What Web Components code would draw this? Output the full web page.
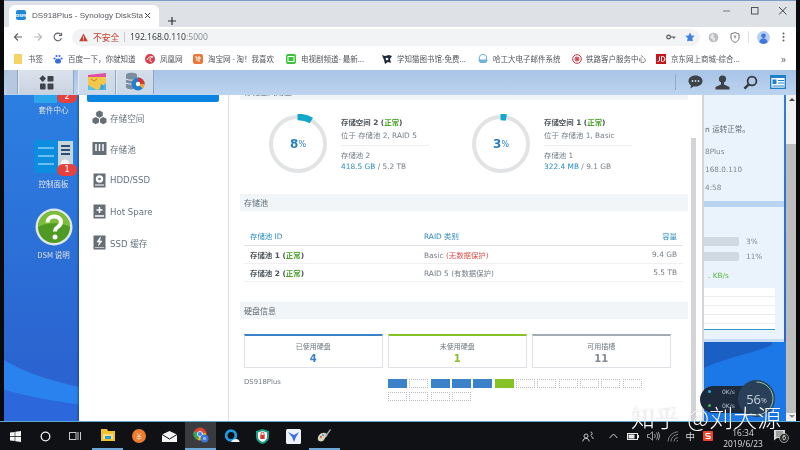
<!doctype html>
<html lang="zh">
<head>
<meta charset="utf-8">
<title>DS918Plus</title>
<style>
html, body { margin: 0; padding: 0; background: #0a0a0c; overflow: hidden; }
</style>
</head>
<body>
<nas-screen></nas-screen>
<script>
(function () {
  const CJK = '"Noto Sans CJK SC", sans-serif';
  const UI = '"Open Sans", "Noto Sans CJK SC", sans-serif';
  const DSM = '"DejaVu Sans", "Noto Sans CJK SC", sans-serif';

  function define(name, html) {
    class Thing extends HTMLElement {
      constructor() {
        super();
        this.attachShadow({ mode: "open" });
        this.shadowRoot.innerHTML = typeof html === "function" ? html(this) : html;
      }
    }
    window.customElements.define(name, Thing);
  }
  const attr = (el, key, dflt) => el.getAttribute(key) ?? dflt ?? "";

  // browser chrome -----------------------------------------------------------
  define("tab-strip", `
<style>
:host { display: flex; height: 26px; background: #dee1e6; border-top: 1px solid #7d9cc8; align-items: flex-end; font-family: ${UI}; color: #3c4043; flex: none; }
.tab { width: 150px; height: 22px; margin-left: 5px; background: #fff; border-radius: 6px 6px 0 0; display: flex; align-items: center; box-sizing: border-box; padding: 0 0 2px 7px; }
.fav { width: 10px; height: 10px; background: #1e88d8; border-radius: 2px; color: #fff; font: 700 4px ${DSM}; display: flex; align-items: center; justify-content: center; flex: none; }
.title { font: 8.100px "Liberation Sans", sans-serif; width: 109px; margin-left: 6px; white-space: nowrap; color: #55595e; }
.x { margin-left: 3px; }
.plus { margin: 0 0 2px 9px; }
.ctl { margin-left: auto; display: flex; align-self: flex-start; gap: 18px; padding: 5px 8px 0 0; }
svg { display: block; }
</style>
<div class="tab"><div class="fav">DSM</div><div class="title">DS918Plus - Synology DiskSta</div>
<svg class="x" width="7" height="7" viewBox="0 0 7 7"><path d="M1 1l5 5M6 1L1 6" stroke="#444" stroke-width="1"/></svg></div>
<svg class="plus" width="8" height="8" viewBox="0 0 8 8"><path d="M4 0v8M0 4h8" stroke="#333" stroke-width="1.2"/></svg>
<div class="ctl">
<svg width="10" height="10" viewBox="0 0 10 10"><path d="M1 5h7" stroke="#777" stroke-width="1"/></svg>
<svg width="10" height="10" viewBox="0 0 10 10"><rect x="1.5" y="1.5" width="6.5" height="6.5" fill="none" stroke="#555" stroke-width="1"/></svg>
<svg width="10" height="10" viewBox="0 0 10 10"><path d="M1 1l7.5 7.5M8.5 1L1 8.5" stroke="#444" stroke-width="1"/></svg>
</div>`);

  define("tool-bar", `
<style>
:host { display: flex; height: 20px; background: #fff; align-items: center; font-family: ${UI}; flex: none; }
svg { display: block; flex: none; }
.nav { display: flex; gap: 10px; margin-left: 9px; }
.box { margin-left: 9px; width: 628px; height: 17px; border-radius: 9px; background: #f1f3f4; display: flex; align-items: center; box-sizing: border-box; padding: 0 5px 0 7px; }
.warn { color: #c5402f; font: 8.700px ${CJK}; margin-left: 5px; }
.sep { width: 1px; height: 10px; background: #c9cbce; margin: 0 5px; }
.url { font-size: 8.600px; color: #303336; }
.url span { color: #8a8e92; }
.end { margin-left: auto; display: flex; gap: 9px; align-items: center; }
.right { display: flex; align-items: center; margin-left: 8px; }
</style>
<div class="nav">
<svg width="10" height="10" viewBox="0 0 10 10"><path d="M9 5H1.5M5 1.5L1.5 5 5 8.5" fill="none" stroke="#5f6368" stroke-width="1.2"/></svg>
<svg width="10" height="10" viewBox="0 0 10 10"><path d="M1 5h7.5M5 1.5L8.5 5 5 8.5" fill="none" stroke="#b8babd" stroke-width="1.2"/></svg>
<svg width="10" height="10" viewBox="0 0 10 10"><path d="M8.500 6.200A3.800 3.800 0 1 1 7.600 2.200M8.600.8v2.600H6" fill="none" stroke="#5f6368" stroke-width="1.1"/></svg>
</div>
<div class="box">
<svg width="9" height="9" viewBox="0 0 9 9"><path d="M4.500.5L8.800 8.300H.2z" fill="#c5402f"/><path d="M4.500 3.200v2.600M4.500 6.400v.9" stroke="#fff" stroke-width=".8"/></svg>
<span class="warn">不安全</span><i class="sep"></i><span class="url">192.168.0.110<span>:5000</span></span>
<div class="end">
<svg width="10" height="8" viewBox="0 0 10 8"><circle cx="2.600" cy="4" r="1.800" fill="none" stroke="#50555a" stroke-width="1.2"/><path d="M4.400 4h5M7.800 4v1.800" stroke="#50555a" stroke-width="1.2"/></svg>
<svg width="10" height="10" viewBox="0 0 10 10"><path d="M5 .4l1.400 3 3.300.4-2.400 2.200.6 3.300L5 8.700 2.100 9.300l.6-3.300L.3 3.800l3.300-.4z" fill="#3f7fe0"/></svg>
</div></div>
<div class="right">
<svg width="11" height="11" viewBox="0 0 11 11"><circle cx="5.500" cy="5.500" r="4.800" fill="#b9bcc0"/><path d="M4 1.500l2.500 1.500-1 2 2 1.500L6 10 4.500 7.500 2 5.500z" fill="#e4e5e7"/></svg>
<svg style="margin-left:11px" width="10" height="11" viewBox="0 0 10 11"><path d="M5 .6l4 1.300v4C9 8.200 7 9.800 5 10.400 3 9.800 1 8.200 1 5.900v-4z" fill="none" stroke="#777" stroke-width="1"/><path d="M3.500 3.500h3L5 7z" fill="#999"/></svg>
<i style="width:1px;height:12px;background:#dcdde0;margin:0 8px 0 8px"></i>
<svg width="13" height="13" viewBox="0 0 13 13"><circle cx="6.500" cy="6.500" r="6.500" fill="#b8cdf2"/><circle cx="6.500" cy="4.700" r="2.300" fill="#3f78dc"/><path d="M2.300 11.200c.6-3 2.400-4 4.200-4s3.600 1 4.200 4a6.500 6.500 0 0 1-8.400 0z" fill="#3f78dc"/></svg>
<svg style="margin-left:12px" width="3" height="10" viewBox="0 0 3 10"><circle cx="1.500" cy="1.500" r="1" fill="#5f6368"/><circle cx="1.500" cy="5" r="1" fill="#5f6368"/><circle cx="1.500" cy="8.500" r="1" fill="#5f6368"/></svg>
</div>`);

  define("book-mark", (el) => `
<style>
:host { display: flex; align-items: center; flex: none; width: ${attr(el, "w", "90")}px; height: 100%; font: 7.500px ${CJK}; color: #50545a; white-space: nowrap; }
slot { display: block; width: 10px; height: 10px; }
::slotted(svg) { display: block; }
span { margin-left: ${attr(el, "gap", "5")}px; }
</style><slot></slot><span>${attr(el, "text")}</span>`);

  define("book-bar", `
<style>
:host { display: flex; height: 23px; background: #fff; padding-left: 9px; flex: none; align-items: center; }
b { margin-left: auto; margin-right: 10px; font: 400 10px ${UI}; color: #666; }
</style><slot></slot><b>»</b>`);

  // dsm top bar --------------------------------------------------------------
  define("dsm-bar", `
<style>
:host { display: flex; height: 25px; background: linear-gradient(#a7c3e6, #bdd4ef); flex: none; box-sizing: border-box; padding-left: 3px; }
.seg { height: 24px; display: flex; align-items: center; justify-content: center; flex: none; border-right: 1px solid #8fa6c2; border-left: 1px solid #e4ebf4; box-sizing: border-box; }
.lead { width: 11px; background: #b6c8df; border-left: 0; }
.main { width: 56px; background: linear-gradient(#dbe2ec, #c9d3e0); }
.app { width: 38px; background: linear-gradient(#d4dde9, #cbd8e8); }
.r { margin-left: auto; display: flex; align-items: center; padding-right: 10px; height: 24px; }
.r i { width: 1px; height: 16px; background: #94aac6; margin-right: 12px; }
svg { display: block; }
</style>
<div class="seg lead"></div>
<div class="seg main"><svg width="15" height="15" viewBox="0 0 15 15" fill="#3f444a"><path d="M3.700 .3l3.300 3.300-3.300 3.300L.4 3.600z"/><rect x="8.500" y="1" width="6" height="5.600" rx=".8"/><rect x="1" y="8.600" width="5.600" height="5.800" rx=".8"/><rect x="8.500" y="8.600" width="6" height="5.800" rx=".8"/></svg></div>
<i style="width:4px;flex:none"></i>
<div class="seg app"><svg width="20" height="20" viewBox="0 0 20 20"><path d="M1 3l18-2v6L1 9z" fill="#e14fa0"/><path d="M1 5h18v13H1z" fill="#f2c74a"/><path d="M1 13l9 5H1z" fill="#55c1e8"/><path d="M11 18l8-7v7z" fill="#46b4e0"/><path d="M4 7l3 2 3-2" fill="none" stroke="#b8872a" stroke-width="1"/><path d="M14 12l3 2-1 4-3-2z" fill="#3e9fdb"/></svg></div>
<div class="seg app"><svg width="21" height="20" viewBox="0 0 21 20"><path d="M1 3c0-3 11-3 11 0v12c0 3-11 3-11 0z" fill="#7b8c9c"/><path d="M1 7c2 1.600 9 1.600 11 0M1 11c2 1.600 9 1.600 11 0" stroke="#e8edf1" fill="none"/><circle cx="13" cy="12" r="6.500" fill="#1f7fd0"/><path d="M13 12V5.500A6.500 6.500 0 0 1 19.500 12z" fill="#d8342c"/><path d="M13 12h6.500a6.500 6.500 0 0 1-2 4.600z" fill="#efa52c"/><circle cx="13" cy="12" r="2.200" fill="#fff"/></svg></div>
<div class="r"><i></i>
<svg width="15" height="14" viewBox="0 0 16 15"><path d="M8 .5c4.200 0 7.500 2.600 7.500 5.900S12.200 12.300 8 12.300c-.7 0-1.300-.1-1.900-.2L2.600 14.500l.6-3.300C1.500 10 .5 8.300.5 6.400.5 3.100 3.800.5 8 .5z" fill="#3c4248"/><g fill="#c3d6ee"><circle cx="4.800" cy="6.400" r="1"/><circle cx="8" cy="6.400" r="1"/><circle cx="11.200" cy="6.400" r="1"/></g></svg>
<svg style="margin:0 13px 0 12px" width="15" height="15" viewBox="0 0 15 15" fill="#3c4248"><circle cx="7.500" cy="4" r="3.600"/><path d="M6 7h3v2.500l5.500 2.500v2.500H.5V12L6 9.500z"/></svg>
<svg style="margin-right:12px" width="15" height="15" viewBox="0 0 15 15"><circle cx="9" cy="6" r="4.400" fill="none" stroke="#33393f" stroke-width="1.800"/><path d="M5.800 9.300L1.400 13.700" stroke="#33393f" stroke-width="2.400"/></svg>
<svg width="16" height="14" viewBox="0 0 16 14"><rect x=".7" y=".7" width="14.600" height="12.600" fill="#fff" stroke="#1e80c8" stroke-width="1.400"/><rect x="1" y="1" width="14" height="2" fill="#1e80c8"/><rect x="2.500" y="4.500" width="4" height="4.500" fill="#1e80c8"/><path d="M8 5.500h6M8 8h6M2.500 11h11.500" stroke="#1e80c8"/></svg>
</div>`);

  // desktop ------------------------------------------------------------------
  define("desk-icon", (el) => `
<style>
:host { position: absolute; left: 0; top: ${attr(el, "top", "0")}px; width: 75px; box-sizing: border-box; padding-left: 24px; display: flex; flex-direction: column; align-items: center; font: 7.500px/10px ${CJK}; color: #e8f1fb; text-shadow: 0 0 1px #1a4fa0; }
.badge { position: absolute; left: 53px; top: ${attr(el, "by", "0")}px; width: 20px; height: 12px; border-radius: 6px; background: #e5413e; color: #fff; font: 8px/12px ${DSM}; text-align: center; text-shadow: none; }
span { white-space: nowrap; }
</style><slot></slot><div class="badge" ${el.hasAttribute("badge") ? "" : "hidden"}>${attr(el, "badge")}</div><span>${attr(el, "text")}</span>`);

  define("side-item", (el) => `
<style>
:host { display: flex; align-items: center; height: 31.300px; padding-left: 13px; font: 8.600px ${DSM}; color: #67737e; white-space: nowrap; }
slot { display: block; width: 15px; height: 15px; }
::slotted(svg) { display: block; }
span { margin-left: 3px; }
</style><slot></slot><span>${attr(el, "text")}</span>`);

  define("side-bar", `
<style>
:host { display: block; width: 149px; background: #fff; flex: none; border-right: 1px solid #dcdfe2; }
.sel { height: 7px; margin: 0 9px 0 8px; background: #0a84e0; border-radius: 0 0 2px 2px; }
</style><div class="sel"></div><slot></slot>`);

  define("sec-head", (el) => `
<style>
:host { display: block; height: 17px; background: #f2f5f8; padding-left: 4px; font: 8px/17px ${CJK}; color: #5e6a74; white-space: nowrap; }
</style>${attr(el, "text")}`);

  define("ring-gauge", (el) => {
    const pct = Number(attr(el, "arc", "8"));
    const c = 2 * Math.PI * 27;
    return `
<style>
:host { display: block; width: 60px; height: 60px; position: relative; flex: none; }
svg { display: block; }
div { position: absolute; inset: 0; display: flex; align-items: center; justify-content: center; font: 700 12px ${DSM}; color: #2a7fc0; }
small { font-size: 8px; font-weight: 400; }
</style>
<svg width="60" height="60" viewBox="0 0 60 60"><circle cx="30" cy="30" r="27" fill="none" stroke="#e1e3e5" stroke-width="4"/><circle cx="30" cy="30" r="27" fill="none" stroke="#12a8cc" stroke-width="6.500" stroke-dasharray="${(pct / 100) * c} ${c}" transform="rotate(-91 30 30)"/></svg>
<div>${attr(el, "value")}<small>%</small></div>`;
  });

  define("volume-card", (el) => `
<style>
:host { display: flex; width: 203px; flex: none; box-sizing: border-box; padding: 14px 0 0 28px; font: 7.400px/13px ${DSM}; color: #757e86; white-space: nowrap; }
.txt { margin: 1.500px 0 0 13px; width: 88px; }
.name { font-weight: 700; color: #4c5359; }
.ok { color: #4aa52a; }
.loc { padding-bottom: 3px; border-bottom: 1px solid #eceef0; }
.pool { margin-top: 3px; line-height: 11px; padding-top: 1px; }
.use { line-height: 11px; }
.use b { color: #2a8cc0; font-weight: 400; }
</style>
<ring-gauge value="${attr(el, "value")}" arc="${attr(el, "arc")}"></ring-gauge>
<div class="txt"><div class="name">${attr(el, "name")} (<span class="ok">正常</span>)</div>
<div class="loc">${attr(el, "loc")}</div><div class="pool">${attr(el, "pool")}</div>
<div class="use"><b>${attr(el, "used")}</b> / ${attr(el, "total")}</div></div>`);

  define("pool-table", `
<style>
:host { display: block; margin: 17px 5px 0 4px; font: 7.400px ${DSM}; color: #757e86; white-space: nowrap; }
.row { display: grid; grid-template-columns: 174px 1fr auto; align-items: center; height: 17px; padding: 0 6px; border-bottom: 1px solid #eef0f2; }
.head { color: #2a8cc0; border-bottom: 1px solid #dfe3e6; box-sizing: border-box; height: 18px; padding-bottom: 3px; }
.row b { color: #4c5359; }
.row b span { color: #4aa52a; }
.bad { color: #d9534f; }
</style>
<div class="row head"><div>存储池 ID</div><div>RAID 类别</div><div>容量</div></div>
<div class="row"><b>存储池 1 (<span>正常</span>)</b><div>Basic <span class="bad">(无数据保护)</span></div><div>9.4 GB</div></div>
<div class="row"><b>存储池 2 (<span>正常</span>)</b><div>RAID 5 (有数据保护)</div><div>5.5 TB</div></div>`);

  define("disk-card", (el) => `
<style>
:host { display: flex; flex-direction: column; align-items: center; width: 138.500px; height: 34px; box-sizing: border-box; border: 1px solid #dfe3e7; border-top: 2.500px solid ${attr(el, "color")}; font: 7px ${CJK}; color: #6e777f; }
.l { margin-top: 6px; line-height: 9px; }
.n { font: 700 10px/12px ${DSM}; color: ${attr(el, "num-color", attr(el, "color"))}; margin-top: 2px; }
</style><div class="l">${attr(el, "label")}</div><div class="n">${attr(el, "num")}</div>`);

  define("disk-slots", `
<style>
:host { display: grid; grid-template-columns: repeat(12, 19px); column-gap: 2.330px; row-gap: 4px; }
i { height: 9px; box-sizing: border-box; }
.u { background: #3b82c8; }
.g { background: #84c226; }
.e { border: 1px dotted #b9bec4; }
</style>
<i class="u"></i><i class="e"></i><i class="u"></i><i class="u"></i><i class="u"></i><i class="g"></i>${'<i class="e"></i>'.repeat(10)}`);

  define("storage-pane", `
<style>
:host { display: block; flex: 1; min-width: 0; background: #fff; position: relative; overflow: hidden; border-right: 2px solid #d4d6d8; box-sizing: border-box; }
.body { width: 448px; margin: -12px 0 0 11px; }
.vols { display: flex; height: 94px; }
.cards { display: flex; gap: 5.500px; margin: 15px 0 0 4px; }
.bays { display: flex; margin: 11px 0 0 4px; font: 6.900px/7px ${DSM}; color: #757e86; }
.bays span { width: 144px; }
.bar { position: absolute; right: 6px; top: 43px; bottom: 0; width: 5px; background: #d2d3d5; }
.m { margin-top: 20px; }
</style>
<div class="body">
<sec-head text="存储空间用量"></sec-head>
<div class="vols">
<volume-card value="8" arc="8.500" name="存储空间 2" loc="位于 存储池 2, RAID 5" pool="存储池 2" used="418.5 GB" total="5.2 TB"></volume-card>
<volume-card value="3" arc="3.500" name="存储空间 1" loc="位于 存储池 1, Basic" pool="存储池 1" used="322.4 MB" total="9.1 GB"></volume-card>
</div>
<sec-head text="存储池"></sec-head>
<pool-table></pool-table>
<sec-head class="m" text="硬盘信息"></sec-head>
<div class="cards">
<disk-card color="#3b82c8" label="已使用硬盘" num="4"></disk-card>
<disk-card color="#84c226" label="未使用硬盘" num="1"></disk-card>
<disk-card color="#a3acb5" num-color="#858c94" label="可用插槽" num="11"></disk-card>
</div>
<div class="bays"><span>DS918Plus</span><disk-slots></disk-slots></div>
</div>
<div class="bar"></div>`);

  define("side-widgets", `
<style>
:host { display: flex; flex-direction: column; width: 82px; flex: none; font: 7.300px ${DSM}; color: #7b8894; white-space: nowrap; position: relative; }
.a, .b { width: 80px; background: #eaf3fc; box-sizing: border-box; }
.a { height: 106px; padding: 29px 0 0 1px; }
.a div { height: 18px; line-height: 12px; }
.a div:first-child { height: 22px; color: #5e6a74; font-size: 7.500px; }
.band { width: 80px; height: 6px; background: #b8d4f0; }
.b { height: 135px; padding-top: 27px; border-bottom: 3px solid #c6dcf3; }
.m { display: flex; align-items: center; height: 15px; }
.m i { width: 35px; height: 9px; background: #d0d9e2; border-radius: 0 2px 2px 0; margin-right: 7px; }
.k { color: #53b53a; margin: 6px 0 0 4px; height: 12px; line-height: 12px; }
.ch { width: 71px; height: 42px; margin-top: 6px; background: repeating-linear-gradient(#fff 0, #fff 8px, #e9edf0 8px, #e9edf0 9px); border-bottom: 1.500px solid #2a9ac8; box-sizing: border-box; }
</style>
<div class="a"><div>n 运转正常。</div><div>8Plus</div><div>168.0.110</div><div>4:58</div></div>
<div class="band"></div>
<div class="b"><div class="m"><i></i>3%</div><div class="m"><i></i>11%</div><div class="k">. KB/s</div><div class="ch"></div></div>`);

  define("net-meter", `
<style>
:host { display: block; position: absolute; left: 696px; top: 285px; width: 80px; height: 38px; font: 6px ${DSM}; color: #b9c4d0; }
.pill { position: absolute; left: 0; top: 6px; width: 62px; height: 27px; border-radius: 14px; background: #1c2a3c; }
.t { position: absolute; left: 22px; white-space: nowrap; }
.d { position: absolute; left: 8px; width: 3px; height: 3px; border-radius: 50%; }
svg { position: absolute; left: 38px; top: 0; }
.v { position: absolute; left: 38px; top: 0; width: 37px; height: 37px; display: flex; align-items: center; justify-content: center; font: 13px ${UI}; color: #c9d4df; }
.v small { font-size: 7px; margin-top: 3px; }
</style>
<div class="pill"></div>
<i class="d" style="top:10px;background:#35a8e0"></i><i class="d" style="top:24px;background:#4cb050"></i>
<div class="t" style="top:8px">0K/s</div><div class="t" style="top:22px">0K/s</div>
<svg width="37" height="37" viewBox="0 0 37 37"><circle cx="18.500" cy="18.500" r="18.500" fill="#2a3f58"/><circle cx="18.500" cy="18.500" r="16.500" fill="none" stroke="#8fcfb0" stroke-width="1" stroke-dasharray="58 200" transform="rotate(-90 18.500 18.500)"/></svg>
<div class="v">56<small>%</small></div>`);

  define("nas-desktop", `
<style>
:host { display: flex; height: 326px; position: relative; overflow: hidden; flex: none; background: linear-gradient(#2c7fe2, #2b64d0 82%); }
.wall { position: absolute; inset: 0; }
.col { width: 75px; flex: none; position: relative; }
.win { display: flex; width: 625px; flex: none; position: relative; box-shadow: -1px 0 2px rgba(10,30,70,.45); }
.scroll { width: 10px; flex: none; background: #f0f0f0; position: relative; }
.scroll b { position: absolute; left: 0; right: 0; top: 49px; bottom: 8px; background: #bdbdbd; }
.scroll i { position: absolute; left: 3px; width: 0; height: 0; border: 3px solid transparent; }
.t { top: 0; border-bottom-color: #444 !important; }
.bt { bottom: 0; border-top-color: #888 !important; }
</style>
<svg class="wall" width="792" height="326" viewBox="0 0 792 326"><path d="M0 265C25 280 50 286 75 292V310C50 306 25 302 0 295z" fill="#2a82ee"/><path d="M0 295C25 302 50 306 75 310V326H0z" fill="#2c68dc"/><path d="M700 247H782V326H700z" fill="#1c78e6"/><path d="M700 273C725 262 750 258 768 250V247H700z" fill="#1a60c4"/></svg>
<div class="col"><slot name="icons"></slot></div>
<div class="win"><slot name="side"></slot><storage-pane></storage-pane></div>
<side-widgets></side-widgets>
<div class="scroll"><i class="t"></i><b></b><i class="bt"></i></div>
<net-meter></net-meter>`);

  // windows taskbar ------------------------------------------------------------
  define("win-taskbar", `
<style>
:host { display: block; position: relative; height: 29px; background: #101114; border-top: 1px solid #5fa8d0; box-sizing: border-box; flex: none; font: 8.400px ${UI}; color: #dcdde0; margin: 0 -4px; }
.row { display: flex; height: 28px; align-items: center; }
.i { width: 31px; height: 28px; display: flex; align-items: center; justify-content: center; flex: none; box-sizing: border-box; }
.s { width: 30px; }
.on { border-bottom: 2px solid #6aa6d6; }
.act { background: #3a3b3e; }
.tray { margin-left: auto; display: flex; align-items: center; padding-right: 11px; height: 28px; }
.clock { text-align: center; line-height: 11px; width: 46px; margin-left: 7px; padding-top: 3px; }
.zh { font: 9.500px ${CJK}; margin-left: 6px; }
svg { display: block; }
</style>
<div class="row">
<div class="i s"><svg width="11" height="11" viewBox="0 0 11 11" fill="#f4f4f4"><path d="M0 1.600L4.700.9v4.200H0zM5.300.8L11 0v5.100H5.300zM0 5.800h4.700V10L0 9.400zM5.300 5.800H11V11l-5.700-.8z"/></svg></div>
<div class="i s"><svg width="11" height="11" viewBox="0 0 11 11"><circle cx="5.500" cy="5.500" r="4.300" fill="none" stroke="#f2f2f2" stroke-width="1.300"/></svg></div>
<div class="i s" style="margin-right:2px"><svg width="12" height="10" viewBox="0 0 12 10" fill="none" stroke="#c8c8c8"><rect x=".5" y="1.500" width="6.500" height="7"/><path d="M9 1v8M11.500 1v8"/></svg></div>
<div class="i on"><svg width="14" height="12" viewBox="0 0 14 12"><path d="M0 0h6l1 2h7v10H0z" fill="#f2c230"/><path d="M2 5h10v5H2z" fill="#fbe08a"/><path d="M4 7h6v3H4z" fill="#2a9bd8"/></svg></div>
<div class="i"><svg width="14" height="14" viewBox="0 0 14 14"><circle cx="7" cy="7" r="7" fill="#ed7b30"/><path d="M5 4l2 3 2-3M4.500 7.500h5M4.500 9.500h5M7 7v4" stroke="#fbd8b8" fill="none" stroke-width=".8"/></svg></div>
<div class="i"><svg width="15" height="11" viewBox="0 0 15 11"><path d="M0 3.500L7.500 0 15 3.500V11H0z" fill="#f4f4f4"/><path d="M0 3.500l7.500 4.500L15 3.500" fill="none" stroke="#101114"/></svg></div>
<div class="i act on"><svg width="16" height="16" viewBox="0 0 16 16"><circle cx="7" cy="7" r="6.500" fill="#db4437"/><path d="M7 7L1 4a6.500 6.500 0 0 0 4 9z" fill="#3aa655"/><path d="M7 7l-2 6a6.500 6.500 0 0 0 8-7z" fill="#f4c20d"/><circle cx="7" cy="7" r="2.600" fill="#4285f4" stroke="#fff" stroke-width=".8"/><circle cx="11.500" cy="11.500" r="4" fill="#3c78d8"/><circle cx="11.500" cy="11.500" r="1.500" fill="#9dc0f2"/></svg></div>
<div class="i"><svg width="16" height="14" viewBox="0 0 16 14"><circle cx="7" cy="6.500" r="4.800" fill="none" stroke="#1f9ae0" stroke-width="2.800"/><path d="M7 13c1-2 3-3 5-3 2 0 3.500 1 3.500 3z" fill="#f2f4f6"/></svg></div>
<div class="i"><svg width="13" height="15" viewBox="0 0 13 15"><path d="M6.500 0L13 2v6c0 3.500-3 5.800-6.500 7C3 13.800 0 11.500 0 8V2z" fill="#17a085"/><path d="M6.500 2L11 3.400V8c0 2.500-2 4-4.500 5C4 12 2 10.500 2 8V3.400z" fill="#fff"/><rect x="4.300" y="6" width="4.400" height="4" fill="#d8372e"/><path d="M5 6V4.800a1.500 1.500 0 0 1 3 0V6" fill="none" stroke="#d8372e"/></svg></div>
<div class="i"><svg width="15" height="15" viewBox="0 0 15 15"><rect width="15" height="15" rx="1.500" fill="#eef2fa"/><path d="M2 3l6 3 5-3-3 5-2 5-2-5z" fill="#3f6fe0"/></svg></div>
<div class="i on"><svg width="15" height="15" viewBox="0 0 15 15"><path d="M1 12C0 8 4 4 8 5c3 .8 3 3 1 4-2 1-1 3-3 4-2 .8-4 .5-5-1z" fill="#d8d2b8"/><circle cx="4" cy="9" r="1" fill="#d84c3c"/><circle cx="6" cy="7" r="1" fill="#3c8cd8"/><path d="M8 8l5-7 1 1-5 7z" fill="#a0a8b0"/></svg></div>
<div class="tray">
<svg width="12" height="11" viewBox="0 0 12 11" fill="none" stroke="#d8d8d8" stroke-width=".9"><circle cx="4" cy="5" r="2"/><path d="M.8 10.500C1 8 2.500 7.500 4 7.500s3 .5 3.200 3M8.500 1a1.600 1.600 0 1 1 0 3.200M9 5.500c1.300.3 2 1 2.200 2.500"/></svg>
<svg style="margin-left:14.500px" width="9" height="6" viewBox="0 0 9 6"><path d="M.6 5L4.500 1l3.900 4" fill="none" stroke="#d8d8d8"/></svg>
<svg style="margin-left:9.500px" width="12" height="7" viewBox="0 0 12 7"><rect x=".5" y=".5" width="10" height="6" fill="none" stroke="#e8e8e8"/><rect x="1.500" y="1.500" width="6" height="4" fill="#e8e8e8"/><rect x="11" y="2" width="1" height="3" fill="#e8e8e8"/></svg>
<svg style="margin-left:7.500px" width="13" height="10" viewBox="0 0 13 10" fill="none" stroke="#a8a8a8" stroke-width=".9"><path d="M.5 3.500h2L5.500.8v8.400L2.500 6.500h-2zM7.500 3a3 3 0 0 1 0 4M9.500 1.500a5.500 5.500 0 0 1 0 7M11.300.8a7.500 7.500 0 0 1 0 8.400"/></svg>
<svg style="margin-left:7.500px" width="12" height="11" viewBox="0 0 12 11" fill="none" stroke="#9a9a9a" stroke-width=".8"><path d="M1 10.500A10 10 0 0 1 11 .8M4 10.500A7 7 0 0 1 11 3.500M7 10.500A4 4 0 0 1 11 6.500M9.800 10.500A1.300 1.300 0 0 1 11 9.300"/></svg>
<span class="zh">中</span>
<svg style="margin-left:8px" width="10" height="10" viewBox="0 0 10 10"><rect width="10" height="10" rx="1" fill="#e8452c"/><path d="M7.500 2.500H3.500c-1 0-1 2 0 2.300l3 .6c1 .3 1 2.100 0 2.100h-4" fill="none" stroke="#fff" stroke-width="1.200"/></svg>
<div class="clock"><div>16:34</div><div>2019/6/23</div></div>
<svg style="margin-left:8px" width="15" height="14" viewBox="0 0 15 14"><path d="M0 1h11v8H3l-3 2.500z" fill="#d8d8d8"/><path d="M2 3h7M2 5h7M2 7h5" stroke="#333" stroke-width=".7"/><circle cx="10" cy="9" r="4.500" fill="#2a2a2a" stroke="#d8d8d8" stroke-width=".6"/><text x="10" y="11.300" font-size="6.500" text-anchor="middle" fill="#fff" font-family="Open Sans">6</text></svg>
</div></div>`);

  define("nas-screen", `
<style>
:host { display: flex; flex-direction: column; width: 800px; height: 450px; box-sizing: border-box; padding: 0 4px; position: relative; overflow: hidden; background: #0a0a0c; filter: blur(.3px); }
.mark { position: absolute; left: 631px; top: 405px; font: 300 24px/24px ${CJK}; word-spacing: 3px; color: #fff; white-space: nowrap; text-shadow: 0 0 1px rgba(0,0,0,.35); }
</style>
<tab-strip></tab-strip>
<tool-bar></tool-bar>
<book-bar>
<book-mark w="40" text="书签" gap="5"><svg width="10" height="10" viewBox="0 0 10 10"><path d="M1 0h8v10H1z" fill="#f6d365"/></svg></book-mark>
<book-mark w="92" text="百度一下，你就知道"><svg width="10" height="10" viewBox="0 0 10 10" fill="#3a6fd8"><ellipse cx="5" cy="7" rx="3" ry="2.600"/><circle cx="1.500" cy="4.500" r="1.100"/><circle cx="8.500" cy="4.500" r="1.100"/><circle cx="3.500" cy="2" r="1.100"/><circle cx="6.500" cy="2" r="1.100"/></svg></book-mark>
<book-mark w="48" text="凤凰网"><svg width="10" height="10" viewBox="0 0 10 10"><circle cx="5" cy="5" r="5" fill="#d9414a"/><path d="M2 6c1-3 4-4 6-3-2 0-3 1-3 3 0 1 1 2 2 1.500" fill="none" stroke="#fff"/></svg></book-mark>
<book-mark w="93" text="淘宝网 - 淘！我喜欢"><svg width="10" height="10" viewBox="0 0 10 10"><rect width="10" height="10" rx="2" fill="#e8793a"/><path d="M2 3h2v4M6 2v6M5 4h3" stroke="#fff" fill="none"/></svg></book-mark>
<book-mark w="96" text="电视剧频道- 最新..."><svg width="10" height="10" viewBox="0 0 10 10"><rect width="10" height="10" rx="2" fill="#3cc13b"/><rect x="2" y="2.500" width="6" height="5" fill="none" stroke="#fff"/></svg></book-mark>
<book-mark w="96" text="学知猫图书馆-免费..."><svg width="10" height="10" viewBox="0 0 10 10" fill="#1f2a3a"><path d="M0 1l3 1 4-1 3 1-2 3 1 4-3-1-3 2-1-4z"/><circle cx="5" cy="5" r="1.300" fill="#fff"/></svg></book-mark>
<book-mark w="94" text="哈工大电子邮件系统"><svg width="10" height="10" viewBox="0 0 10 10"><circle cx="5" cy="4" r="3.700" fill="none" stroke="#6fb2dc"/><path d="M0 5.500h10L8 9H2z" fill="#6fb2dc"/></svg></book-mark>
<book-mark w="84" gap="4" text="铁路客户服务中心"><svg width="10" height="10" viewBox="0 0 10 10" fill="none" stroke="#c0323a"><circle cx="5" cy="5" r="4.300"/><circle cx="5" cy="5" r="2"/><circle cx="5" cy="5" r=".8" fill="#c0323a"/></svg></book-mark>
<book-mark w="90" text="京东网上商城-综合..."><svg width="10" height="10" viewBox="0 0 10 10"><rect width="10" height="10" fill="#c8161d"/><path d="M3.500 2.500V6c0 1.500-1 1.500-2 1.300M5.500 2.500h1a2.300 2.300 0 0 1 0 5h-1z" fill="none" stroke="#fff"/></svg></book-mark>
</book-bar>
<dsm-bar></dsm-bar>
<nas-desktop>
<div slot="icons">
<desk-icon badge="2" text="套件中心" by="-14" top="10">
<svg width="23" height="8" viewBox="0 0 23 8" style="position:absolute;left:30px;top:-10px"><rect width="23" height="8" fill="#2ba6ea"/></svg>
</desk-icon>
<desk-icon badge="1" text="控制面板" by="24" top="45">
<svg style="margin-bottom:6px;display:block" width="40" height="33" viewBox="0 0 40 33"><rect width="40" height="33" fill="#0d8de0"/><rect x="24" y="1" width="15" height="31" fill="#c8d3dc"/><path d="M4 8h16M4 16h16M4 24h16" stroke="#8ad0f5" stroke-width="1.300"/><path d="M27 6h9M27 10h9M27 14h9" stroke-width="2" stroke="#2a4f70"/><circle cx="31" cy="24" r="4.500" fill="#f2f4f6"/></svg>
</desk-icon>
<desk-icon text="DSM 说明" top="113">
<svg style="margin-bottom:4px;display:block" width="38" height="38" viewBox="0 0 38 38"><circle cx="19" cy="19" r="18.500" fill="#dfe6e4"/><circle cx="19" cy="19" r="16" fill="#4f9a22"/><path d="M3 19a16 16 0 0 1 32 0c-8-5-24-5-32 0z" fill="#7cbd3a"/><path d="M12.500 14.500c0-8 13.500-8 13.500-.500 0 5-6 4.500-6 9.500" fill="none" stroke="#fff" stroke-width="4"/><circle cx="20" cy="29" r="2.500" fill="#fff"/></svg>
</desk-icon>
</div>
<side-bar slot="side">
<side-item text="存储空间"><svg width="15" height="15" viewBox="0 0 15 15" fill="#666f78"><path d="M7.500 .5l3.300 1.800v3.600L7.500 7.700 4.200 5.900V2.300zM3.700 7l3.300 1.800v3.700L3.700 14.300.5 12.500V8.800zM11.300 7l3.200 1.800v3.700l-3.200 1.800L8 12.500V8.800z"/></svg></side-item>
<side-item text="存储池"><svg width="15" height="15" viewBox="0 0 15 15"><rect x=".5" y="1" width="14" height="13" fill="#666f78"/><path d="M4 3v7M7.500 3v7M11 3v7" stroke="#fff" stroke-width="1.500"/></svg></side-item>
<side-item text="HDD/SSD"><svg width="15" height="15" viewBox="0 0 15 15"><rect x="1.500" y=".5" width="12" height="14" fill="#666f78"/><circle cx="7.500" cy="6" r="3.700" fill="#fff"/><circle cx="7.500" cy="6" r="1.300" fill="#666f78"/><path d="M3 12h9" stroke="#fff"/></svg></side-item>
<side-item text="Hot Spare"><svg width="15" height="15" viewBox="0 0 15 15"><rect x="1.500" y=".5" width="12" height="14" fill="#666f78"/><path d="M7.500 3v6M4.500 6h6M3 12h9" stroke="#fff" stroke-width="1.500"/></svg></side-item>
<side-item text="SSD 缓存"><svg width="15" height="15" viewBox="0 0 15 15"><rect x="1.500" y=".5" width="12" height="14" fill="#666f78"/><path d="M8.500 2L5 7h2.500L6.500 10.500 10 6H7.500zM3 12.500h9" stroke="#fff" fill="#fff" stroke-width=".6"/></svg></side-item>
</side-bar>
</nas-desktop>
<win-taskbar></win-taskbar>
<div class="mark">知乎 @刘大源</div>`);
})();
</script>
</body>
</html>
